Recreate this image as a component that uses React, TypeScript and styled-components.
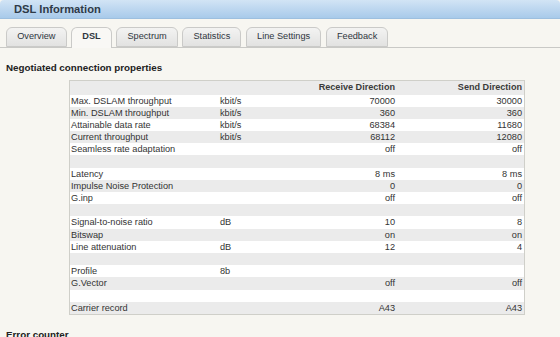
import styled, { createGlobalStyle } from 'styled-components';

const GlobalStyle = createGlobalStyle`
    body {
        margin: 0;
        background: #f7f6f1;
        font-family: "Liberation Sans", Arial, sans-serif;
        color: #333;
    }
`;

const Page = styled.div`
    width: 560px;
    height: 337px;
    overflow: hidden;
`;

const TitleBar = styled.div`
    height: 19px;
    padding-left: 14px;
    border-radius: 4px 4px 0 0;
    background: linear-gradient(#d2e4f5, #a8caea);
    border-bottom: 1px solid #9dbfdf;
    box-sizing: border-box;
    font-size: 11.2px;
    font-weight: bold;
    line-height: 19px;
    color: #2e3a47;
`;

const TabBar = styled.ul`
    display: flex;
    gap: 4.4px;
    margin: 8px 0 0;
    padding: 0 0 0 6px;
    list-style: none;
    height: 20px;
    border-bottom: 1px solid #c9c9c6;
`;

type TabProps = {
    active?: boolean;
}

const Tab = styled.li<TabProps>`
    box-sizing: border-box;
    height: ${({ active }) => active ? "21px" : "20px"};
    padding: 0 10.2px;
    border: 1px solid #cacac8;
    border-bottom: ${({ active }) => active ? "none" : "1px solid #cacac8"};
    border-radius: 6px 6px 0 0;
    background: ${({ active }) => active ? "#f9f8f5" : "linear-gradient(#f3f3f2, #e2e2e1)"};
    font-size: 9.2px;
    font-weight: ${({ active }) => active ? "bold" : "normal"};
    line-height: 17px;
    color: #2f3640;
`;

const Heading = styled.h3`
    margin: 14px 0 0 6px;
    font-size: 9.8px;
    line-height: 12px;
    font-weight: bold;
    color: #222;
`;

const Table = styled.div`
    width: 454px;
    margin: 6px 0 0 69px;
    border: 1px solid #cfcfc9;
    background: #fff;
`;

type RowProps = {
    shaded?: boolean;
    head?: boolean;
}

const Row = styled.div<RowProps>`
    display: grid;
    grid-template-columns: 149px 81px 97px 127px;
    height: ${({ head }) => head ? "13.5px" : "12.2px"};
    line-height: ${({ head }) => head ? "13.5px" : "12px"};
    background: ${({ shaded }) => shaded ? "#ebebeb" : "#fff"};
    font-size: ${({ head }) => head ? "9.1px" : "9.2px"};
    font-weight: ${({ head }) => head ? "bold" : "normal"};
    color: ${({ head }) => head ? "#3a3a3a" : "#333"};
    white-space: nowrap;
`;

const Cell = styled.span<{ right?: boolean }>`
    padding: ${({ right }) => right ? "0 2px 0 0" : "0 0 0 1px"};
    text-align: ${({ right }) => right ? "right" : "left"};
`;

type DataRow = [string, string, string, string];

const rows: DataRow[] = [
    ["Max. DSLAM throughput", "kbit/s", "70000", "30000"],
    ["Min. DSLAM throughput", "kbit/s", "360", "360"],
    ["Attainable data rate", "kbit/s", "68384", "11680"],
    ["Current throughput", "kbit/s", "68112", "12080"],
    ["Seamless rate adaptation", "", "off", "off"],
    ["", "", "", ""],
    ["Latency", "", "8 ms", "8 ms"],
    ["Impulse Noise Protection", "", "0", "0"],
    ["G.inp", "", "off", "off"],
    ["", "", "", ""],
    ["Signal-to-noise ratio", "dB", "10", "8"],
    ["Bitswap", "", "on", "on"],
    ["Line attenuation", "dB", "12", "4"],
    ["", "", "", ""],
    ["Profile", "8b", "", ""],
    ["G.Vector", "", "off", "off"],
    ["", "", "", ""],
    ["Carrier record", "", "A43", "A43"],
];

const tabs = ["Overview", "DSL", "Spectrum", "Statistics", "Line Settings", "Feedback"];

const App = () => (
    <Page>
        <GlobalStyle />
        <TitleBar>DSL Information</TitleBar>
        <TabBar>
            {tabs.map(t => (
                <Tab key={t} active={t === "DSL"}>{t}</Tab>
            ))}
        </TabBar>
        <Heading>Negotiated connection properties</Heading>
        <Table>
            <Row head shaded>
                <Cell />
                <Cell />
                <Cell right>Receive Direction</Cell>
                <Cell right>Send Direction</Cell>
            </Row>
            {rows.map((r, i) => (
                <Row key={i} shaded={i % 2 === 1}>
                    <Cell>{r[0]}</Cell>
                    <Cell>{r[1]}</Cell>
                    <Cell right>{r[2]}</Cell>
                    <Cell right>{r[3]}</Cell>
                </Row>
            ))}
        </Table>
        <Heading>Error counter</Heading>
    </Page>
);

export default App;
